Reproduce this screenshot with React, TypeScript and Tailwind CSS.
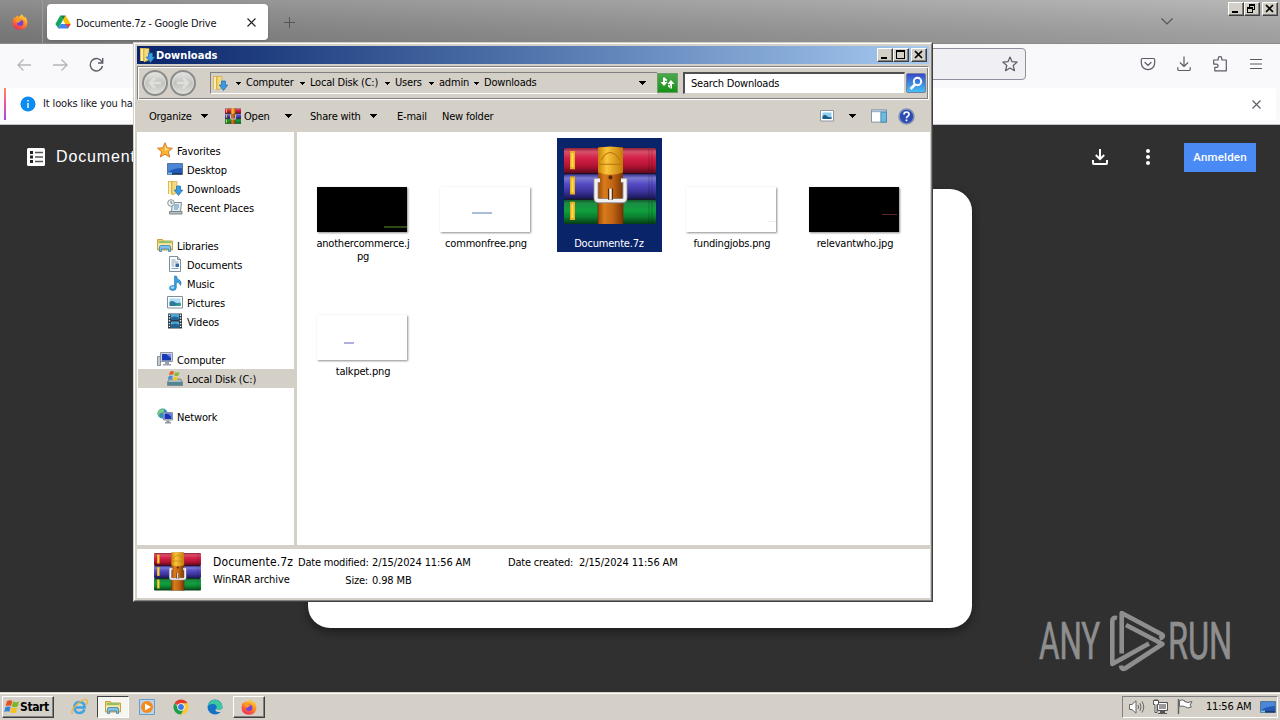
import React from 'react';

interface IconProps {
  className?: string;
}

const RAISED =
  'bg-[#d4d0c8] border border-t-white border-l-white border-b-[#404040] border-r-[#404040] shadow-[inset_-1px_-1px_0_#808080]';

/* ---------- icons ---------- */

const WinRarIcon: React.FC<IconProps> = ({ className }) => (
  <svg className={className} viewBox="0 0 92 78" preserveAspectRatio="none">
    <defs>
      <linearGradient id="bookRed" x1="0" y1="0" x2="0" y2="1">
        <stop offset="0" stopColor="#8d2038" />
        <stop offset=".15" stopColor="#d8506c" />
        <stop offset=".4" stopColor="#d42048" />
        <stop offset=".7" stopColor="#b41434" />
        <stop offset="1" stopColor="#5c0a1c" />
      </linearGradient>
      <linearGradient id="bookBlue" x1="0" y1="0" x2="0" y2="1">
        <stop offset="0" stopColor="#3a3a94" />
        <stop offset=".15" stopColor="#7a78d0" />
        <stop offset=".4" stopColor="#544ac4" />
        <stop offset=".7" stopColor="#3c349c" />
        <stop offset="1" stopColor="#1c1858" />
      </linearGradient>
      <linearGradient id="bookGreen" x1="0" y1="0" x2="0" y2="1">
        <stop offset="0" stopColor="#0c5a24" />
        <stop offset=".15" stopColor="#1c8c44" />
        <stop offset=".45" stopColor="#10a03c" />
        <stop offset=".7" stopColor="#0c8030" />
        <stop offset="1" stopColor="#053c14" />
      </linearGradient>
      <linearGradient id="strap" x1="0" y1="0" x2="1" y2="0">
        <stop offset="0" stopColor="#a04808" />
        <stop offset=".25" stopColor="#d87c1c" />
        <stop offset=".6" stopColor="#c06414" />
        <stop offset="1" stopColor="#7c3404" />
      </linearGradient>
      <linearGradient id="strapTop" x1="0" y1="0" x2="1" y2="0">
        <stop offset="0" stopColor="#c88408" />
        <stop offset=".35" stopColor="#fcc43c" />
        <stop offset="1" stopColor="#c07c08" />
      </linearGradient>
    </defs>
    <path d="M1 26h90v3H1zM1 51h90v3H1z" fill="#140e24" />
    <rect y="2" width="92" height="25" rx="2" fill="url(#bookRed)" />
    <rect y="28" width="92" height="24" rx="2" fill="url(#bookBlue)" />
    <rect y="53" width="92" height="24" rx="2" fill="url(#bookGreen)" />
    <path d="M85 3v22M88 3v22M85 29v22M88 29v22M85 54v22M88 54v22" stroke="#000" strokeOpacity=".2" />
    <path d="M8.500 5v18M8.500 30v18M8.500 55v18" stroke="#e8b020" strokeWidth="5" />
    <path d="M8.500 7v14M8.500 32v14M8.500 57v14" stroke="#ffdc50" strokeWidth="2" />
    <path d="M34 1h25v76H34z" fill="url(#strap)" />
    <path d="M34 2q12-3 25 0v24q-12 5-25 0z" fill="url(#strapTop)" />
    <path d="M37 14q9-15 19 0M35 18h23" fill="none" stroke="#b87408" />
    <path d="M34 56v21M59 56v21" stroke="#6c2c04" strokeOpacity=".7" />
    <circle cx="46.500" cy="31" r="2" fill="#5c2804" />
    <path d="M36 34h-4v17q0 3 3 3h23q3 0 3-3V34h-4" fill="none" stroke="#8c8c94" strokeWidth="5" />
    <path d="M36 34h-4v17q0 3 3 3h23q3 0 3-3V34h-4" fill="none" stroke="#f2f0f0" strokeWidth="3.200" />
    <path d="M46.500 42v11" stroke="#5c2804" strokeWidth="5" />
    <path d="M46.500 42v11" stroke="#f4f2f2" strokeWidth="2.500" />
  </svg>
);

const FolderDownIcon: React.FC<IconProps> = ({ className }) => (
  <svg className={className} viewBox="0 0 16 16">
    <path d="M1 1h6v13H1z" fill="#e2b94e" />
    <path d="M2 2h2v12H2z" fill="#fbeeb0" />
    <path d="M5 1.500h5V13l-5 2z" fill="#f2da82" stroke="#c9a13e" strokeWidth=".6" />
    <path d="M9.500 6h4v4h2.300L11.500 15.500 7.200 10h2.300z" fill="#3b9ae0" stroke="#1c6bb0" strokeWidth=".7" />
  </svg>
);

const StarIcon: React.FC<IconProps> = ({ className }) => (
  <svg className={className} viewBox="0 0 16 16">
    <path d="M8 .8l2.100 5 5.300.4-4.100 3.500 1.400 5.300L8 12.200 3.300 15l1.400-5.300L.6 6.200l5.300-.4z" fill="#fbb62c" stroke="#d9762a" />
    <path d="M8 3l1.300 3.500 3 .4L8 9z" fill="#ffe39a" />
  </svg>
);

const DesktopIcon: React.FC<IconProps> = ({ className }) => (
  <svg className={className} viewBox="0 0 16 16">
    <path d="M.5 2.500h15v11H.5z" fill="#2259b5" stroke="#5b7690" />
    <path d="M1 3h14v4Q7 7 1 11z" fill="#4b86d8" />
    <path d="M1 12h14v1.500H1z" fill="#1b3a6c" />
    <path d="M1 11.500h4v2H1z" fill="#7cc0e8" />
  </svg>
);

const RecentIcon: React.FC<IconProps> = ({ className }) => (
  <svg className={className} viewBox="0 0 16 16">
    <path d="M5.500 3.500h9l-1 9h-9z" fill="#e4ecf0" stroke="#7f8d96" />
    <path d="M7 6h5M7 8h5M7 10h4" stroke="#5893b8" />
    <path d="M2.500 12.500h12.500v2.500H2.500z" fill="#b9c0c4" stroke="#7c858b" />
    <circle cx="4" cy="4" r="3.300" fill="#eef3f6" stroke="#8a959c" />
    <path d="M4 2v2.200h1.600" fill="none" stroke="#4c5a63" strokeWidth=".8" />
  </svg>
);

const LibraryIcon: React.FC<IconProps> = ({ className }) => (
  <svg className={className} viewBox="0 0 16 16">
    <path d="M.5 2.500h5l1 1.500h9v9H.5z" fill="#eccf6b" stroke="#c7a23f" />
    <path d="M2 4h12v2H2z" fill="#8bc36b" />
    <path d="M1 6.500h14V11H1z" fill="#f9e9a8" />
    <path d="M2.500 14.500V10q0-1.500 1.500-1.500h8q1.500 0 1.500 1.500v4.500h-2V12h-7v2.500z" fill="#7fc1e6" stroke="#3c82b4" strokeWidth=".8" />
  </svg>
);

const DocumentIcon: React.FC<IconProps> = ({ className }) => (
  <svg className={className} viewBox="0 0 16 16">
    <path d="M2.500.5h8l3 3v12h-11z" fill="#fafcfd" stroke="#7d8f9c" />
    <path d="M10.500.5v3h3" fill="#d2dde4" stroke="#7d8f9c" />
    <path d="M4.500 4h4M4.500 6h7M4.500 8h3M4.500 10h3M4.500 12.500h7" stroke="#88a6bd" />
    <path d="M8.500 7.500h3.500v3.500H8.500z" fill="#2f6bab" />
  </svg>
);

const MusicIcon: React.FC<IconProps> = ({ className }) => (
  <svg className={className} viewBox="0 0 16 16">
    <path d="M7.500 1h1.800q.5 3 3.700 4.500 2 1.500.5 5-.5-3-4.200-3.500v5.500q0 3-3.600 3-3.200 0-3.200-2.400 0-2.500 3.300-2.600 1 0 1.700.3z" fill="#3a9fe0" stroke="#1c6eb0" strokeWidth=".6" />
    <ellipse cx="5.500" cy="12.500" rx="1.800" ry="1.200" fill="#9cd6f6" />
  </svg>
);

const PicturesIcon: React.FC<IconProps> = ({ className }) => (
  <svg className={className} viewBox="0 0 16 16">
    <path d="M.5 2.500h15v11.500H.5z" fill="#fff" stroke="#7f8e99" />
    <path d="M2.500 4.500h11v7.500h-11z" fill="#a9ddf3" />
    <path d="M2.500 12V8q3-2 5 0t6 .5V12z" fill="#2b7a9b" />
    <path d="M8 12q2-3 5.500-2.500V12z" fill="#2f9b8d" />
  </svg>
);

const VideosIcon: React.FC<IconProps> = ({ className }) => (
  <svg className={className} viewBox="0 0 16 16">
    <path d="M1 .5h14v15H1z" fill="#2c3b47" />
    <path d="M4 1h8v6H4zM4 8.500h8V15H4z" fill="#4fa5d8" />
    <path d="M4 5q4-3 8 0v2H4zM4 12q4-3 8 0v3H4z" fill="#21648f" />
    <path d="M2.500 1.500v13M13.500 1.500v13" stroke="#e8eef2" strokeWidth="1.400" strokeDasharray="1.400 1.400" />
  </svg>
);

const ComputerIcon: React.FC<IconProps> = ({ className }) => (
  <svg className={className} viewBox="0 0 16 16">
    <path d="M.5 5.500h3v9h-3z" fill="#c4cbd0" stroke="#87919a" />
    <path d="M3.500 1.500h12v9h-12z" fill="#cdd2dc" stroke="#8d95a5" />
    <path d="M5 3h9v6.500H5z" fill="#1838b4" />
    <path d="M9 3h5v4z" fill="#6f8cf0" />
    <path d="M8 11h4v2h2v1.500H6V13h2z" fill="#9aa2ac" />
  </svg>
);

const DiskIcon: React.FC<IconProps> = ({ className }) => (
  <svg className={className} viewBox="0 0 16 16">
    <path d="M2.500 9h11l2 3v3.500H.5V12z" fill="#aab9c0" stroke="#5f7078" strokeWidth=".7" />
    <path d="M1 12h14v3H1z" fill="#4f8794" />
    <path d="M3 1.500q2.500-1 4 0L6 5Q4.500 4 2 5z" fill="#ea5a2a" />
    <path d="M8 2q2 1 4.500 0l-1 3.500q-2 1-4.300 0z" fill="#83b93a" />
    <path d="M1.800 6Q4 5 5.700 6l-1 3.500Q3 8.500.8 9.500z" fill="#3f8ddb" />
    <path d="M6.800 6.500q2 1 4.400 0l-1 3.500q-2 1-4.400 0z" fill="#f6c52c" />
  </svg>
);

const NetworkIcon: React.FC<IconProps> = ({ className }) => (
  <svg className={className} viewBox="0 0 16 16">
    <circle cx="5.500" cy="5.500" r="5" fill="#2d8fc0" />
    <path d="M2 2q4-2 5 0T4 5t0 4q-3-1-3.500-3z" fill="#7ccf7a" />
    <path d="M6.500 4.500h9v7.500h-9z" fill="#c8cede" stroke="#8890a4" />
    <path d="M7.500 5.500h7v5.500h-7z" fill="#1a34b8" />
    <path d="M10.500 5.500h4V9z" fill="#5c7cec" />
    <path d="M9.500 12.500h3v1.500h1.500v1.500h-6V14h1.500z" fill="#8e96a4" />
  </svg>
);

const FirefoxIcon: React.FC<IconProps> = ({ className }) => (
  <svg className={className} viewBox="0 0 16 16">
    <defs>
      <linearGradient id="fox" x1=".8" y1="0" x2=".3" y2="1">
        <stop offset="0" stopColor="#ffe03a" />
        <stop offset=".5" stopColor="#ff8a1e" />
        <stop offset="1" stopColor="#f0285a" />
      </linearGradient>
    </defs>
    <path d="M8 2Q9.200.8 9.500.2q2 1.200 2.500 3.300 1-.2 1-1 2.700 2.700 2.500 6Q15 15.500 8 15.800.8 15.300.5 8.500.6 5 2.300 3q.2 1 .7 1.200Q4.500 1.800 6 1.500q-.3 1 .2 1.500z" fill="url(#fox)" />
    <circle cx="8.200" cy="8.700" r="3.200" fill="#7a42d8" />
    <path d="M3.500 6q2-1.700 4.500-.5 1.500 0 1.700 1-.8.800-2 .9-.6 1.300-2.200 1.300Q3.300 8 3.500 6z" fill="#ff9a26" />
  </svg>
);

const DriveIcon: React.FC<IconProps> = ({ className }) => (
  <svg className={className} viewBox="0 0 16 14">
    <path d="M5.300.5h5.400L8 5z" fill="#188038" />
    <path d="M5.300.5L8 5 3.200 13.300.4 8.900z" fill="#12a65c" />
    <path d="M10.700.5l4.900 8.400h-5.300L8 5z" fill="#fbbc04" />
    <path d="M15.600 8.900L13 13.400H3l2.700-4.500z" fill="#4285f4" />
    <path d="M15.600 8.900L13 13.300l-2.700-4.400z" fill="#ea4335" />
  </svg>
);

const WindowsFlag: React.FC<IconProps> = ({ className }) => (
  <svg className={className} viewBox="0 0 16 14">
    <path d="M3 1q3-1.500 5.300 0L7 6Q4.500 4.800 1.700 6z" fill="#e8501e" />
    <path d="M9 1.500q3 1.500 6 0L13.500 6.500q-3 1.300-5.700 0z" fill="#7db52c" />
    <path d="M1.500 7q3-1.200 5.200 0l-1.300 4.800Q3 10.800.2 12z" fill="#3584d8" />
    <path d="M7.500 7.500q3 1.200 5.800 0L12 12.400q-3 1.400-5.800 0z" fill="#f8c21c" />
  </svg>
);

const ThumbsIcon: React.FC<IconProps> = ({ className }) => (
  <svg className={className} viewBox="0 0 14 12">
    <path d="M.5.500h13v10.500H.5z" fill="#fff" stroke="#8a97a4" />
    <path d="M2.500 2.500h9v6.500h-9z" fill="#8fcdee" />
    <path d="M2.500 9V6q2.500-2 4.500 0t4.500 1v2z" fill="#1f5c84" />
  </svg>
);

/* ---------- small pieces ---------- */

const Arrow: React.FC<IconProps> = ({ className = '' }) => (
  <svg className={`shrink-0 ${className}`} width="7" height="4" viewBox="0 0 7 4" shapeRendering="crispEdges">
    <path d="M0 0h7L3.500 4z" fill="#000" />
  </svg>
);

const Crumb: React.FC<{ label: string; className: string }> = ({ label, className }) => (
  <>
    <span className="flex w-4 shrink-0 justify-center">
      <svg width="5" height="3" viewBox="0 0 5 3" shapeRendering="crispEdges">
        <path d="M0 0h5L2.500 3z" fill="#000" />
      </svg>
    </span>
    <span className={`shrink-0 ${className}`}>{label}</span>
  </>
);

const CaptionButtons: React.FC<{ restore?: boolean }> = ({ restore }) => {
  const button = `flex h-3.5 w-4 items-center justify-center ${RAISED}`;
  return (
    <div className="flex">
      <div className={button}>
        <svg width="12" height="10" viewBox="0 0 12 10" shapeRendering="crispEdges">
          <path d="M2 7h6v2H2z" />
        </svg>
      </div>
      <div className={button}>
        <svg width="12" height="10" viewBox="0 0 12 10" shapeRendering="crispEdges">
          {restore ? (
            <path d="M3 0h6v6H7v3H1V3h2zM4 2v1h3v2h1V2zM2 5v3h4V5z" fillRule="evenodd" />
          ) : (
            <path d="M1 0h9v9H1zM2 2v6h7V2z" fillRule="evenodd" />
          )}
        </svg>
      </div>
      <div className={`ml-0.5 ${button}`}>
        <svg width="12" height="10" viewBox="0 0 12 10">
          <path d="M2 1l7 7M9 1L2 8" stroke="#000" strokeWidth="1.700" />
        </svg>
      </div>
    </div>
  );
};

/* ---------- browser behind the window ---------- */

const Browser: React.FC = () => (
  <div className="flex h-[692px] flex-col">
    <div className="flex h-[44px] shrink-0 border-b border-[#8a8a8a] bg-linear-to-r from-[#828282] to-[#b0b0b0]">
      <div className="flex w-full bg-linear-to-b from-white/10 to-black/10">
        <div className="flex w-[43px] items-center border-r border-[#999] pl-3">
          <FirefoxIcon className="h-4 w-4" />
        </div>
        <div className="mt-1 ml-1 flex h-9 w-[221px] items-center rounded bg-white pl-2 shadow">
          <DriveIcon className="h-3.5 w-4" />
          <span className="mt-[3px] ml-[5px] w-[171px] tracking-[-0.220px] text-[#15141a]">Documente.7z - Google Drive</span>
          <svg width="9" height="9" viewBox="0 0 9 9">
            <path d="M.5.500l8 8M8.500.500l-8 8" stroke="#222" strokeWidth="1.100" />
          </svg>
        </div>
        <svg className="mt-[17px] ml-4" width="11" height="11" viewBox="0 0 11 11">
          <path d="M5.500 0v11M0 5.500h11" stroke="#555" />
        </svg>
        <div className="ml-auto flex pt-0.5 pr-0.5">
          <svg className="mt-4 mr-[55px]" width="12" height="7" viewBox="0 0 12 7">
            <path d="M.5.500L6 6 11.500.500" fill="none" stroke="#555" strokeWidth="1.200" />
          </svg>
          <CaptionButtons restore />
        </div>
      </div>
    </div>

    <div className="flex h-11 shrink-0 bg-[#f9f9fb] pt-1">
      <svg className="mt-[10px] ml-[17px] text-[#b5b5b9]" width="51" height="14" viewBox="0 0 51 14" fill="none" stroke="currentColor" strokeWidth="1.300">
        <path d="M14 7H1M6.500 1.500L1 7l5.500 5.500M36 7h14M44.500 1.500L50 7l-5.500 5.500" />
      </svg>
      <svg className="mt-[9px] ml-[21px]" width="15" height="16" viewBox="0 0 15 16" fill="none" stroke="#5b5b66" strokeWidth="1.400">
        <path d="M13 5A6.200 6.200 0 1 0 13.500 9M13.700 1v5H9" />
      </svg>
      <div className="ml-auto flex h-8 w-[200px] items-center justify-end rounded border border-[#8f8f9d] bg-[#f0f0f4] pr-[7px]">
        <svg width="16" height="16" viewBox="0 0 16 16" fill="none" stroke="#5b5b66" strokeWidth="1.200" strokeLinejoin="round">
          <path d="M8 1l2 4.700 5.200.4-4 3.400 1.300 5.200L8 12l-4.500 2.700 1.300-5.200-4-3.400L6 5.700z" />
        </svg>
      </div>
      <div className="flex w-[254px] gap-5 pt-2 pl-[114px]">
        <svg className="shrink-0" width="16" height="16" viewBox="0 0 16 16" fill="none" stroke="#5b5b66" strokeWidth="1.200" strokeLinecap="round">
          <path d="M2.500 2.500h11q1.200 0 1.200 1.200V7a6.700 6.700 0 0 1-13.400 0V3.700q0-1.200 1.200-1.200zM5 6.500l3 3 3-3" />
        </svg>
        <svg className="shrink-0" width="16" height="16" viewBox="0 0 16 16" fill="none" stroke="#5b5b66" strokeWidth="1.200" strokeLinecap="round">
          <path d="M8 .8v9.500M4.200 6.800L8 10.500l3.800-3.700M1.800 11.500v1.700q0 1.300 1.300 1.300h9.800q1.300 0 1.300-1.300v-1.700" />
        </svg>
        <svg className="shrink-0" width="16" height="16" viewBox="0 0 16 16" fill="none" stroke="#5b5b66" strokeWidth="1.200" strokeLinejoin="round">
          <path d="M6.200 4V2.500a1.800 1.800 0 0 1 3.600 0V4h4.500v10.800H2.800v-3.500h1.700a1.600 1.600 0 0 0 0-3.200H1.700V4z" />
        </svg>
        <svg className="shrink-0" width="16" height="16" viewBox="0 0 16 16" stroke="#5b5b66" strokeWidth="1.200">
          <path d="M2 3.500h12M2 8h12M2 12.500h12" />
        </svg>
      </div>
    </div>

    <div className="flex h-[37px] shrink-0 border-b border-[#c6c6c8] bg-[#f9f9fb] pr-1 pb-1 pl-1">
      <div className="w-0.5 bg-linear-to-b from-[#ff8a5a] via-[#f0509a] to-[#9a48e0]" />
      <div className="flex flex-1 items-center rounded-r bg-white pr-[15px] pl-3.5">
        <svg width="16" height="16" viewBox="0 0 16 16">
          <circle cx="8" cy="8" r="7.500" fill="#0b8cf0" />
          <path d="M8 7v5M8 4v1.600" stroke="#fff" strokeWidth="1.400" />
        </svg>
        <span className="ml-[7px] tracking-[-0.140px] text-[#15141a]">It looks like you ha</span>
        <svg className="ml-auto" width="9" height="9" viewBox="0 0 9 9">
          <path d="M.5.500l8 8M8.500.500l-8 8" stroke="#5b5b66" strokeWidth="1.100" />
        </svg>
      </div>
    </div>

    <div className="flex-1 bg-[#303030]">
      <div className="flex h-16 items-center pr-6 pl-[27px]">
        <svg width="18" height="18" viewBox="0 0 18 18">
          <rect width="18" height="18" rx="1.500" fill="#fff" />
          <path d="M3 3h3v3H3zM3 7.500h3v3H3zM3 12h3v3H3z" fill="#222" />
          <path d="M8 4.500h8M8 9h8M8 13.500h8" stroke="#555" strokeWidth="1.300" />
        </svg>
        <span className="ml-[11px] w-[90px] font-['Liberation_Sans',sans-serif] text-base tracking-[0.850px] text-white">Documente.7z</span>
        <svg className="ml-auto" width="16" height="16" viewBox="0 0 16 16" fill="none" stroke="#fff" strokeWidth="2">
          <path d="M8 0v10M3.800 6L8 10.200 12.200 6M1 11v3.300q0 .7.700.7h12.600q.7 0 .7-.7V11" />
        </svg>
        <svg className="ml-[38px]" width="4" height="16" viewBox="0 0 4 16" fill="#fff">
          <circle cx="2" cy="2" r="2" />
          <circle cx="2" cy="8" r="2" />
          <circle cx="2" cy="14" r="2" />
        </svg>
        <div className="ml-[34px] flex h-[29px] w-18 items-center justify-center bg-[#4a8af4] font-[Roboto,sans-serif] text-[11.500px] font-medium tracking-[0.200px] text-white">
          Anmelden
        </div>
      </div>
      <div className="mx-auto h-[439px] w-[664px] rounded-[22px] bg-white shadow-[0_4px_10px_rgba(0,0,0,0.4)]" />
    </div>
  </div>
);

const AnyRunLogo: React.FC<IconProps> = ({ className }) => (
  <svg className={className} width="210" height="64" viewBox="0 0 210 64" overflow="visible">
    <g fill="#8e8e8e" stroke="#8e8e8e" strokeWidth=".7" fontFamily="Roboto, sans-serif" fontSize="51">
      <text x="3" y="51" textLength="61" lengthAdjust="spacingAndGlyphs">ANY</text>
      <text x="132" y="51" textLength="64" lengthAdjust="spacingAndGlyphs">RUN</text>
    </g>
    <g transform="translate(69 0)" fill="none" stroke="#8e8e8e" strokeWidth="4.600" strokeLinejoin="round">
      <path d="M12 10q-4.700-1-4.700 3v43L44 35.500" />
      <path d="M16.700 45.500V5L57 26.500q2.500 2.500-2.500 4" />
      <path d="M21 17l36.500 19L20 60.500q-3.500 1.500-4-3" />
    </g>
  </svg>
);

/* ---------- explorer window ---------- */

interface NavEntry {
  label: string;
  icon: React.FC<IconProps>;
  root?: boolean;
  active?: boolean;
}

const NAV: (NavEntry | null)[] = [
  { label: 'Favorites', icon: StarIcon, root: true },
  { label: 'Desktop', icon: DesktopIcon },
  { label: 'Downloads', icon: FolderDownIcon },
  { label: 'Recent Places', icon: RecentIcon },
  null,
  { label: 'Libraries', icon: LibraryIcon, root: true },
  { label: 'Documents', icon: DocumentIcon },
  { label: 'Music', icon: MusicIcon },
  { label: 'Pictures', icon: PicturesIcon },
  { label: 'Videos', icon: VideosIcon },
  null,
  { label: 'Computer', icon: ComputerIcon, root: true },
  { label: 'Local Disk (C:)', icon: DiskIcon, active: true },
  null,
  { label: 'Network', icon: NetworkIcon, root: true },
];

interface FileEntry {
  name: string;
  bg?: string;
  mark?: string;
  archive?: boolean;
}

const FILES: FileEntry[] = [
  { name: 'anothercommerce.jpg', bg: 'bg-black', mark: 'mt-[39px] ml-[67px] w-[23px] h-0.5 bg-[#2c4a14]' },
  { name: 'commonfree.png', bg: 'bg-white', mark: 'mt-[25px] ml-8 w-5 h-0.5 bg-[#a9bdd6]' },
  { name: 'Documente.7z', archive: true },
  { name: 'fundingjobs.png', bg: 'bg-white', mark: 'mt-[34px] ml-[82px] w-2 h-px bg-[#eee]' },
  { name: 'relevantwho.jpg', bg: 'bg-black', mark: 'mt-[27px] ml-[73px] w-[15px] h-px bg-[#5c2a20]' },
  { name: 'talkpet.png', bg: 'bg-white', mark: 'mt-[27px] ml-[27px] w-[10px] h-0.5 bg-[#b0b0e0]' },
];

const FileTile: React.FC<{ file: FileEntry }> = ({ file }) => (
  <div className={`flex h-[114px] w-[105px] flex-col items-center ${file.archive ? 'bg-[#0a246a] text-white' : ''}`}>
    <div className="flex h-[99px] shrink-0 flex-col items-center">
      {file.archive ? (
        <WinRarIcon className="mt-2 h-[79px] w-[92px]" />
      ) : (
        <div className={`mt-[49px] mr-[3px] h-[45px] w-[90px] shadow-[1px_1px_2px_rgba(0,0,0,0.45)] ${file.bg}`}>
          <div className={`float-left ${file.mark}`} />
        </div>
      )}
    </div>
    <span className="mr-px w-[96px] text-center leading-[13px] break-all whitespace-normal">{file.name}</span>
  </div>
);

const NavButton: React.FC<{ flip?: boolean }> = ({ flip }) => (
  <div className="flex h-[26px] w-[26px] items-center justify-center rounded-full border-2 border-[#8c8c8a] bg-linear-to-b from-[#e6e6e4] via-[#c2c2be] to-[#dededa] shadow-[inset_0_0_0_1px_#dcdcda]">
    <svg className={flip ? 'rotate-180' : ''} width="14" height="14" viewBox="0 0 14 14" fill="none" stroke="#dededb" strokeWidth="2.500">
      <path d="M13 7H2M7 2L2 7l5 5" />
    </svg>
  </div>
);

const Explorer: React.FC = () => (
  <div className="absolute top-[42px] left-[133px] h-[560px] w-[800px] border border-t-[#d4d0c8] border-r-[#404040] border-b-[#404040] border-l-[#d4d0c8]">
    <div className="flex h-full flex-col border border-t-white border-r-[#808080] border-b-[#808080] border-l-white bg-[#d4d0c8] p-0.5">
      {/* Title bar */}
      <div className="flex h-[18px] shrink-0 items-center bg-linear-to-r from-[#0a246a] to-[#a6caf0] pr-0.5 pl-0.5">
        <FolderDownIcon className="h-4 w-4" />
        <span className="mt-px mr-auto ml-px text-[11px] font-bold tracking-[0.050px] text-white">Downloads</span>
        <CaptionButtons />
      </div>

      {/* Address row */}
      <div className="mt-0.5 flex h-[34px] shrink-0 items-center border border-[#808080] border-r-white border-b-white pl-1 shadow-[inset_1px_1px_0_#fff,inset_-1px_-1px_0_#808080]">
        <div className="flex w-[68px] gap-0.5">
          <NavButton />
          <NavButton flip />
        </div>
        <div className="flex h-[22px] w-[447px] items-center border-t border-l border-b border-[#808080] border-b-white">
          <FolderDownIcon className="mr-0.5 ml-px h-4 w-4" />
          <Crumb label="Computer" className="w-12" />
          <Crumb label="Local Disk (C:)" className="w-[69px]" />
          <Crumb label="Users" className="w-7" />
          <Crumb label="admin" className="w-[29px]" />
          <Crumb label="Downloads" className="w-14" />
          <Arrow className="mr-[11px] ml-auto" />
        </div>
        <div className="flex h-[20px] w-[21px] items-center justify-center border border-[#6d9c6d] bg-linear-to-b from-[#4aa84a] to-[#149114]">
          <svg width="17" height="14" viewBox="0 0 17 14" fill="#fff">
            <path d="M4 1.500h2v4.500h2.500L5 10 1.500 6H4zM5.500 1.500L8 3.500v2L5.500 4zM11 12.500h2V8h2.500L12 4 8.500 8H11zM11.500 12.500L9 10.500v-2l2.500 1.500z" />
          </svg>
        </div>
        <div className="ml-[5px] flex h-[22px] w-[222px] items-center border border-t-2 border-l-2 border-[#d4d0c8] border-t-[#505050] border-l-[#505050] bg-white pl-[6px]">
          Search Downloads
        </div>
        <div className="ml-px flex h-5 w-5 items-center justify-center rounded-xs border border-[#6f80a8] bg-linear-to-b from-[#3a48c8] to-[#45c0f0]">
          <svg width="16" height="16" viewBox="0 0 16 16" fill="none" stroke="#fff" strokeWidth="2">
            <circle cx="9.500" cy="6.500" r="3.700" />
            <path d="M7 9.500L2.500 14" strokeWidth="2.500" />
          </svg>
        </div>
      </div>

      {/* Command bar */}
      <div className="flex h-8 shrink-0 items-center pr-3.5 pl-3">
        <span className="mt-px w-[52px]">Organize</span>
        <Arrow />
        <WinRarIcon className="mr-[3px] ml-[17px] h-4 w-4" />
        <span className="mt-px w-[41px]">Open</span>
        <Arrow />
        <span className="mt-px ml-[18px] w-[60px]">Share with</span>
        <Arrow />
        <span className="mt-px ml-5 w-[45px]">E-mail</span>
        <span className="mt-px">New folder</span>
        <ThumbsIcon className="mr-3.5 ml-auto h-3 w-3.5" />
        <Arrow className="ml-px" />
        <svg className="mr-[11px] ml-[15px]" width="16" height="14" viewBox="0 0 17 14">
          <path d="M.5.500h16v13H.5z" fill="#fff" stroke="#7a8da0" />
          <path d="M1 1h15v2H1z" fill="#9ab7d0" />
          <path d="M10.500 3h6v10.500h-6z" fill="#6fb9de" stroke="#4a8ab0" />
        </svg>
        <svg width="17" height="17" viewBox="0 0 17 17">
          <circle cx="8.500" cy="8.500" r="7.500" fill="#2c4cb4" stroke="#8493b8" strokeWidth="1.600" />
          <path d="M6 6.500q0-2.500 2.500-2.500T11 6.300q0 1.200-1.200 1.900-1.300.7-1.300 2M8.500 11.500v1.800" fill="none" stroke="#fff" strokeWidth="1.700" />
        </svg>
      </div>

      {/* Navigation pane and file list */}
      <div className="-mr-px flex h-[413px] shrink-0">
        <div className="w-[157px] bg-white pt-[9px] pl-px">
          {NAV.map((entry, i) =>
            entry ? (
              <div
                key={i}
                className={`flex h-[19px] items-center gap-1 ${entry.root ? 'pl-[19px]' : 'pl-[29px]'} ${entry.active ? 'bg-[#d4d0c8]' : ''}`}
              >
                <entry.icon className="-mt-0.5 h-4 w-4" />
                <span className="mt-0.5 tracking-[-0.130px]">{entry.label}</span>
              </div>
            ) : (
              <div key={i} className="h-[19px]" />
            )
          )}
        </div>
        <div className="ml-[3px] flex-1 bg-white pt-[6px] pl-3.5">
          <div className="grid grid-cols-[repeat(5,105px)] gap-x-[18px] gap-y-3.5">
            {FILES.map((file) => (
              <FileTile key={file.name} file={file} />
            ))}
          </div>
        </div>
      </div>

      {/* Details pane */}
      <div className="mt-1 -mr-px flex flex-1 bg-white pt-[3px] pl-[17px]">
        <WinRarIcon className="h-[39px] w-[47px]" />
        <div className="mt-px ml-3 w-[85px] leading-[18px]">
          <div className="text-[12px] tracking-[0.120px]">Documente.7z</div>
          <div className="tracking-[-0.100px]">WinRAR archive</div>
        </div>
        <div className="mt-0.5 w-[70px] text-right leading-[18px]">
          <div>Date modified:</div>
          <div>Size:</div>
        </div>
        <div className="mt-0.5 ml-1 w-[136px] leading-[18px] tracking-[-0.120px]">
          <div>2/15/2024 11:56 AM</div>
          <div>0.98 MB</div>
        </div>
        <div className="mt-0.5 w-[67px] leading-[18px]">Date created:</div>
        <div className="mt-0.5 ml-1 leading-[18px] tracking-[-0.120px]">2/15/2024 11:56 AM</div>
      </div>
    </div>
  </div>
);

/* ---------- taskbar ---------- */

const Taskbar: React.FC = () => (
  <div className="flex h-7 items-center border-t border-[#d4d0c8] bg-[#d4d0c8] pl-0.5 shadow-[inset_0_1px_0_#fff]">
    <div className={`flex h-[22px] w-[52px] items-center pl-px ${RAISED}`}>
      <WindowsFlag className="h-3.5 w-4" />
      <span className="text-[12px] font-bold tracking-[-0.400px]">Start</span>
    </div>
    <div className="flex items-center">
      <svg className="ml-[17px]" width="17" height="16" viewBox="0 0 17 16">
        <path d="M13.500 10.500Q12 14 8.500 14 3.500 14 3.500 8.500 3.500 3 8.500 3t5 5.500H5" fill="none" stroke="#3fa4e0" strokeWidth="2.600" />
        <path d="M1.500 15Q-1 11 7 4.500T16 1.500t-1.500 4" fill="none" stroke="#eab43c" strokeWidth="1.300" />
      </svg>
      <div className="ml-[9px] flex h-[22px] w-8 items-center justify-center border border-t-[#404040] border-r-white border-b-white border-l-[#404040] bg-[#f6f5f2]">
        <LibraryIcon className="h-4 w-4" />
      </div>
      <svg className="ml-[10px]" width="16" height="16" viewBox="0 0 16 16">
        <path d="M.5.500h15v15H.5z" fill="#b6d4ec" stroke="#6d9cc4" />
        <circle cx="8" cy="8" r="6" fill="#f58a1c" />
        <path d="M6 4.500L12 8l-6 3.500z" fill="#fff" />
      </svg>
      <svg className="ml-[18px]" width="16" height="16" viewBox="0 0 16 16">
        <path d="M1.500 4.200A7.500 7.500 0 0 1 14.500 4.200L8 8z" fill="#e33b2e" />
        <path d="M14.500 4.200A7.500 7.500 0 0 1 8 15.500L10 8 8 4.200z" fill="#fcc934" />
        <path d="M1.500 4.200A7.500 7.500 0 0 0 8 15.500l2.500-5L5 8z" fill="#1e9e4a" />
        <circle cx="8" cy="8" r="3.700" fill="#fff" />
        <circle cx="8" cy="8" r="2.900" fill="#3b78e7" />
      </svg>
      <svg className="ml-[18px]" width="16" height="16" viewBox="0 0 16 16">
        <circle cx="8" cy="8" r="7.500" fill="#1672c4" />
        <path d="M.8 7A7.400 7.400 0 0 1 15.500 8q-.5 3-4 3-2.500 0-2-1.500Q10.500 6 7 5 3 4.500.8 7z" fill="#3cc8a0" />
        <path d="M9.500 9.500q-.5 1.500 2 1.500 2.500 0 3.500-1.500l.5 2-2 1.500q-4 .5-5-1.500 0-1.500 1-2z" fill="#d4d0c8" />
      </svg>
      <div className={`ml-2.5 flex h-[22px] w-8 items-center justify-center ${RAISED}`}>
        <FirefoxIcon className="h-4 w-4" />
      </div>
    </div>
    <div className="mr-0.5 ml-auto flex h-[22px] w-[156px] items-center border border-t-[#808080] border-r-white border-b-white border-l-[#808080] pl-[6px]">
      <svg width="16" height="14" viewBox="0 0 16 14" fill="none" stroke="#666">
        <path d="M.5 4.500H3L7 .8v12.400L3 9.500H.5z" fill="#fff" />
        <path d="M9 5q1 2 0 4M11 3.200q2 3.800 0 7.600M13 1.500q3.500 5.500 0 11" />
      </svg>
      <svg className="ml-[8px]" width="16" height="15" viewBox="0 0 16 15">
        <path d="M4.500 3.500h10v8h-10z" fill="#999" stroke="#555" />
        <path d="M5.500 4.500h8v6h-8z" fill="none" stroke="#fff" />
        <path d="M7 12h5v2h2v1H5v-1h2z" fill="#555" />
        <path d="M.5 1.500h5v4h-1.500v8h-2v-8H.5z" fill="#fff" stroke="#555" />
        <path d="M2 0v2M4 0v2" stroke="#555" />
      </svg>
      <svg className="ml-[8px]" width="16" height="15" viewBox="0 0 16 15" fill="#fff" stroke="#666">
        <path d="M1.500 0v15" strokeWidth="1.500" />
        <path d="M2.500 1.500q3-1 5 0v1q3 2 7.500 0l-2 3.500 1.500 2q-4 2-7-.5-2-1-5 0z" />
      </svg>
      <span className="ml-[13px] w-[54px] whitespace-nowrap">11:56 AM</span>
      <DesktopIcon className="h-4 w-4" />
    </div>
  </div>
);

export default function App() {
  return (
    <div className="relative h-[720px] w-[1280px] overflow-hidden bg-[#303030] font-['DejaVu_Sans_Condensed','DejaVu_Sans',sans-serif] text-[11px] leading-4 tracking-[-0.200px] whitespace-nowrap text-black">
      <Browser />
      <AnyRunLogo className="absolute top-[608px] left-[1036px]" />
      <Explorer />
      <Taskbar />
    </div>
  );
}
